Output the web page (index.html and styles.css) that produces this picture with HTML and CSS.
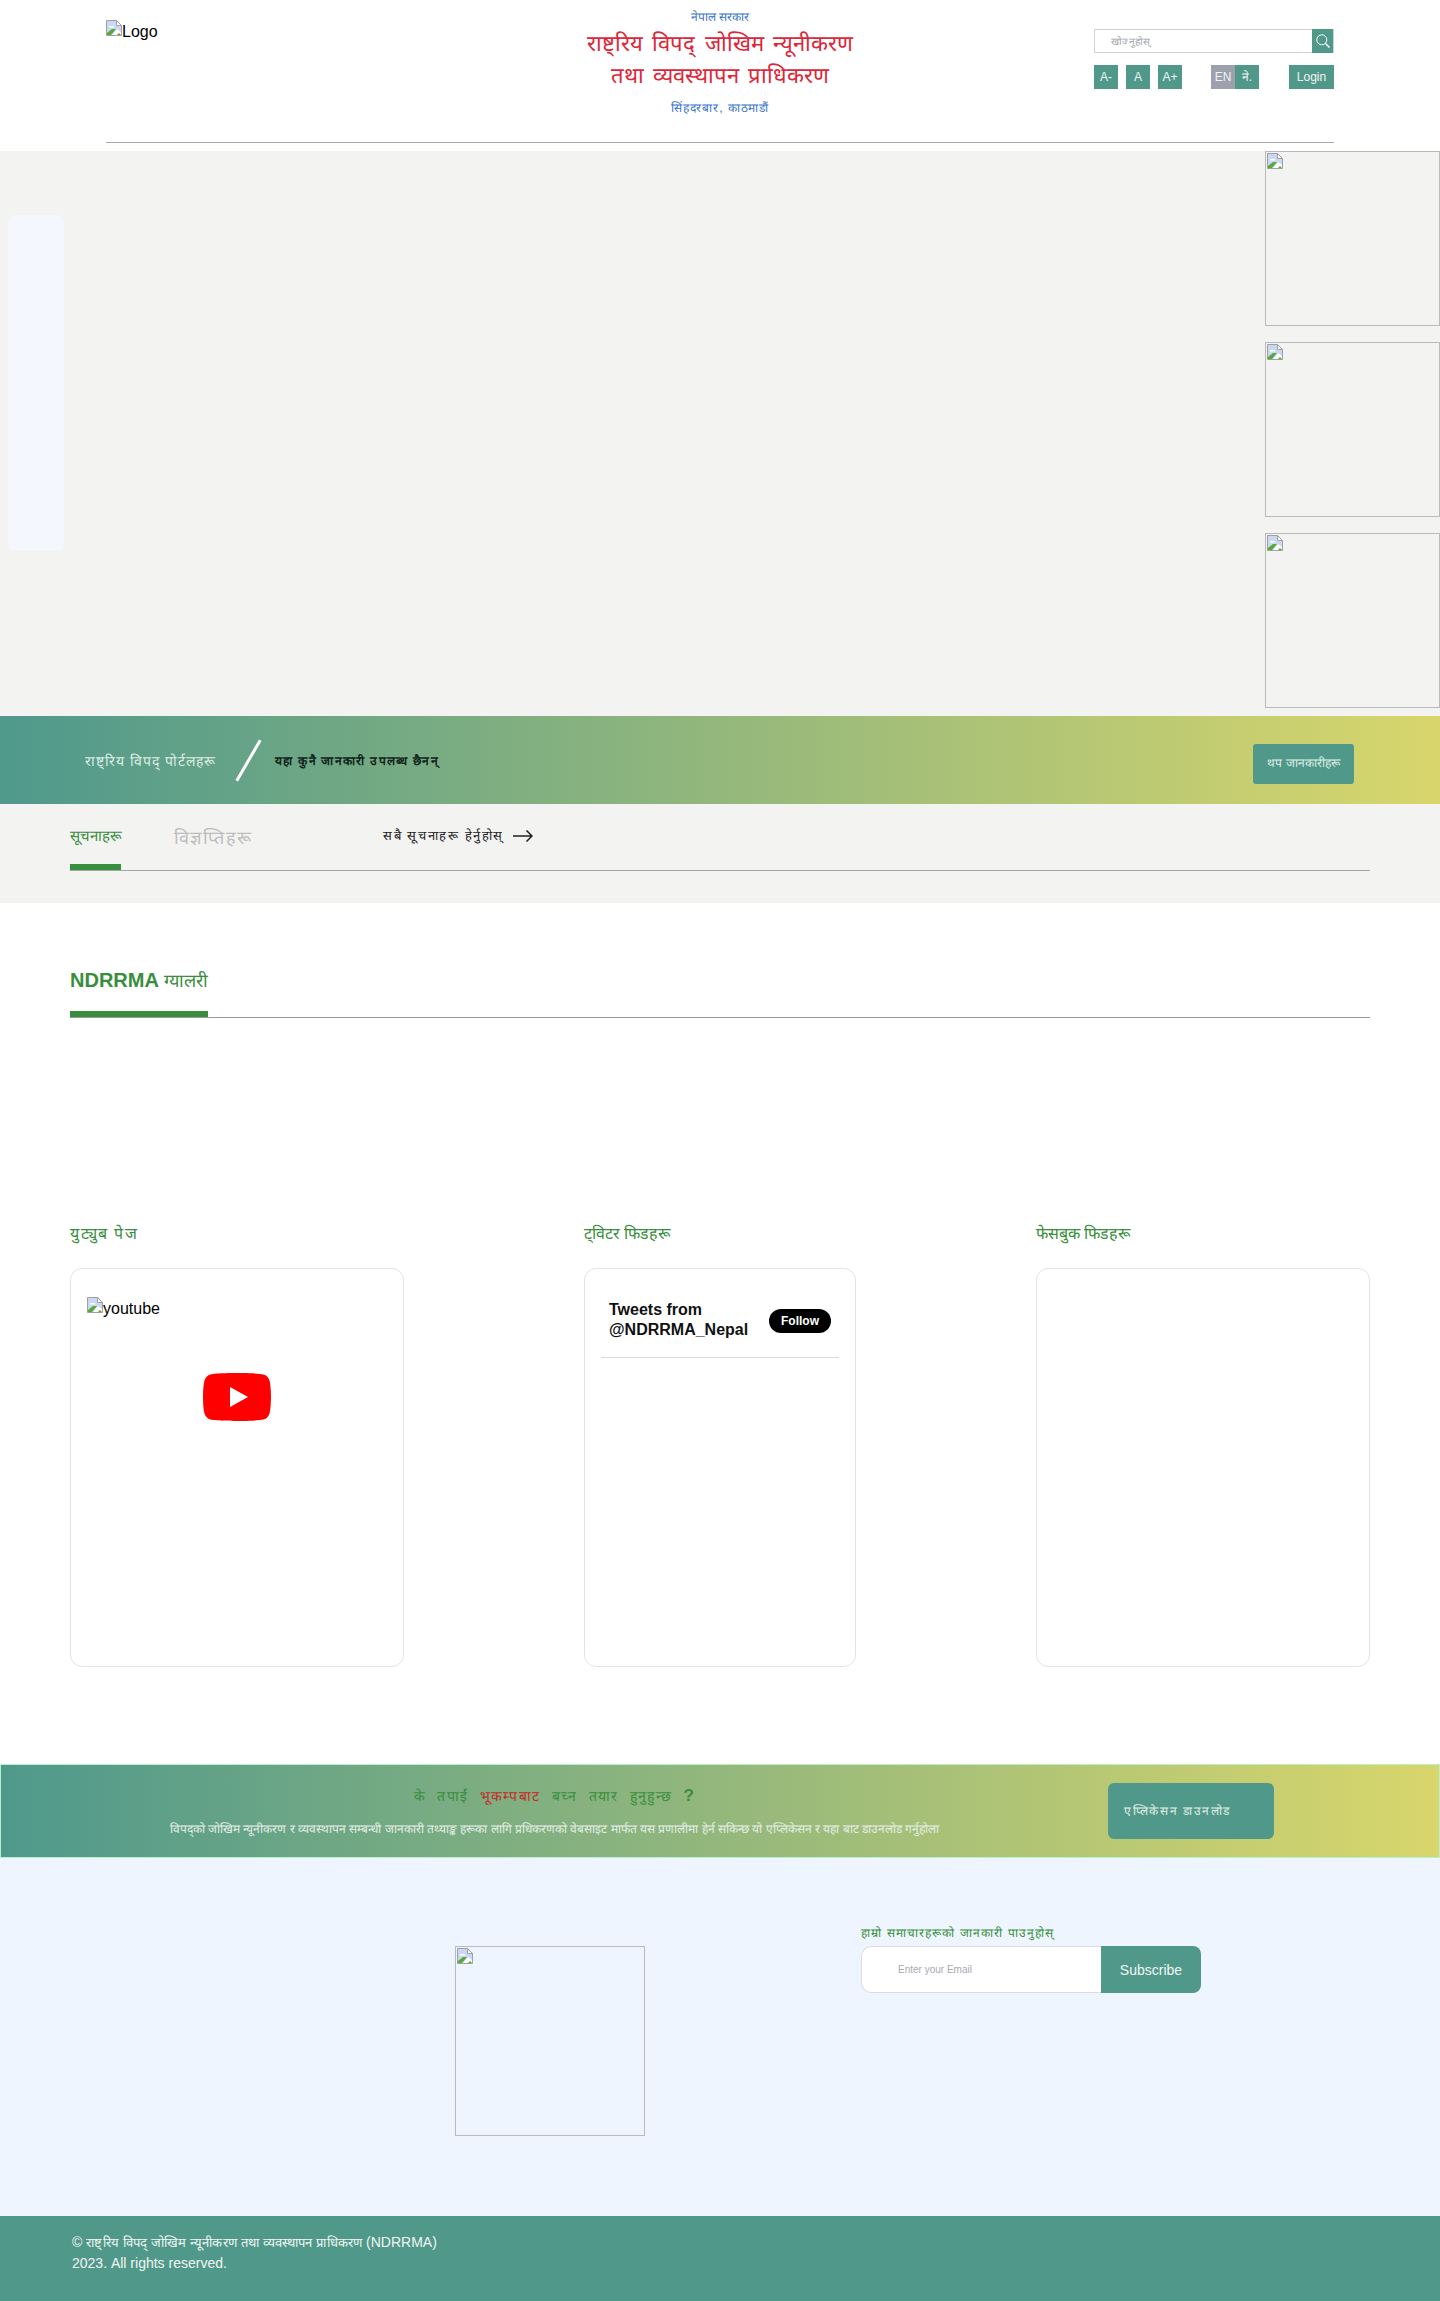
FILE: index.html
```html
<!DOCTYPE html>
<html lang="ne">
<head>
  <meta charset="UTF-8" />
  <meta name="viewport" content="width=device-width, initial-scale=1.0"/>
  <title>NDRRMA</title>
  <link rel="stylesheet" href="styles.css">
</head>
<body>

  <svg class="defs" width="0" height="0">
    <symbol id="broken" viewBox="0 0 16 16">
      <path d="M.5.5h10l5 5v10H.5z" fill="#c9d8f4" stroke="#a0a0a0"/>
      <path d="M10.5.5v5h5z" fill="#fff" stroke="#a0a0a0"/>
      <path d="M3 6h5v1.500H3z" fill="#fff"/>
      <path d="M1 15V13l5-4h4L5 15z" fill="#5aa83c"/>
      <path d="M6 15l5-6 4 3v3z" fill="#fff"/>
      <path d="M11 15l2-2 2 2z" fill="#5aa83c"/>
    </symbol>
  </svg>

  <header class="top">
    <div class="logo"><svg class="broken"><use href="#broken"/></svg>Logo</div>
    <div class="org">
      <p class="org-small">नेपाल सरकार</p>
      <h1>राष्ट्रिय विपद् जोखिम न्यूनीकरण<br>तथा व्यवस्थापन प्राधिकरण</h1>
      <p class="org-small org-addr">सिंहदरबार, काठमाडौं</p>
    </div>
    <div class="tools">
      <form class="search">
        <input type="text" placeholder="खोज्नुहोस्">
        <button type="button" aria-label="search">
          <svg width="14" height="14" viewBox="0 0 14 14" fill="none" stroke="#fff" stroke-width="1"><circle cx="5.800" cy="5.800" r="5"/><path d="M9.500 9.500l4 4" stroke-width="1.500"/></svg>
        </button>
      </form>
      <div class="tool-row">
        <div class="sizes"><a>A-</a><a>A</a><a>A+</a></div>
        <div class="langs"><a class="off">EN</a><a>ने.</a></div>
        <a class="login">Login</a>
      </div>
    </div>
  </header>

  <section class="hero">
    <div class="side-panel"></div>
    <div class="hero-imgs">
      <div class="hero-img"><svg class="broken"><use href="#broken"/></svg></div>
      <div class="hero-img"><svg class="broken"><use href="#broken"/></svg></div>
      <div class="hero-img"><svg class="broken"><use href="#broken"/></svg></div>
    </div>
  </section>

  <section class="strip">
    <span class="strip-label">राष्ट्रिय विपद् पोर्टलहरू</span>
    <span class="strip-slash"></span>
    <span class="strip-text">यहा कुनै जानकारी उपलब्ध छैनन्</span>
    <a class="strip-btn">थप जानकारीहरू</a>
  </section>

  <section class="tabs">
    <div class="tabs-row">
      <a class="tab active">सूचनाहरू</a>
      <a class="tab">विज्ञप्तिहरू</a>
      <a class="tab-link">सबै सूचनाहरू हेर्नुहोस्
        <svg width="20" height="12" viewBox="0 0 20 12" fill="none" stroke="#222" stroke-width="1.500"><path d="M0 6h19M13.500.500L19 6l-5.500 5.500"/></svg>
      </a>
    </div>
  </section>

  <section class="gallery">
    <div class="gallery-head"><h2>NDRRMA <span>ग्यालरी</span></h2></div>
  </section>

  <section class="social">
    <div class="col col-yt">
      <h3>युट्युब पेज</h3>
      <div class="card">
        <div class="yt-alt"><svg class="broken"><use href="#broken"/></svg>youtube</div>
        <svg class="yt-logo" width="68" height="48" viewBox="0 0 68 48"><path d="M66.500 7.500c-.800-3-3-5.300-6-6.100C55.200 0 34 0 34 0S12.800 0 7.500 1.400c-3 .800-5.200 3.100-6 6.100C0 12.900 0 24 0 24s0 11.100 1.500 16.500c.800 3 3 5.300 6 6.100C12.800 48 34 48 34 48s21.200 0 26.500-1.400c3-.800 5.200-3.100 6-6.100C68 35.100 68 24 68 24s0-11.100-1.500-16.500z" fill="#f00"/><path d="M27 34l18-10-18-10z" fill="#fff"/></svg>
      </div>
    </div>
    <div class="col col-tw">
      <h3>ट्विटर फिडहरू</h3>
      <div class="card">
        <div class="tw-head">
          <div class="tw-title">Tweets from @NDRRMA_Nepal</div>
          <a class="tw-follow">Follow</a>
        </div>
      </div>
    </div>
    <div class="col col-fb">
      <h3>फेसबुक फिडहरू</h3>
      <div class="card"></div>
    </div>
  </section>

  <section class="cta">
    <div class="cta-text">
      <h4>के तपाईं <em>भूकम्पबाट</em> बच्न तयार हुनुहुन्छ <b>?</b></h4>
      <p>विपद्को जोखिम न्यूनीकरण र व्यवस्थापन सम्बन्धी जानकारी तथ्याङ्क हरूका लागि प्रधिकरणको वेबसाइट मार्फत यस प्रणालीमा हेर्न सकिन्छ यो एप्लिकेसन र यहा बाट डाउनलोड गर्नुहोला</p>
    </div>
    <a class="cta-btn">एप्लिकेसन डाउनलोड</a>
  </section>

  <section class="sub">
    <div class="sub-logo"><svg class="broken"><use href="#broken"/></svg></div>
    <div class="sub-form">
      <label>हाम्रो समाचारहरूको जानकारी पाउनुहोस्</label>
      <div class="sub-row">
        <input type="text" placeholder="Enter your Email">
        <button type="button">Subscribe</button>
      </div>
    </div>
  </section>

  <footer class="foot">
    <p>© <span>राष्ट्रिय विपद् जोखिम न्यूनीकरण तथा व्यवस्थापन प्राधिकरण</span> (NDRRMA)<br>2023. All rights reserved.</p>
  </footer>

</body>
</html>
```

FILE: styles.css
```css
* {
  box-sizing: border-box;
}

body {
  margin: 0;
  background: #fff;
  color: #000;
  font-family: "Liberation Sans", Arial, sans-serif;
  font-size: 16px;
}

h1, h2, h3, h4, p {
  margin: 0;
}

.defs {
  position: absolute;
}

.broken {
  width: 16px;
  height: 16px;
  flex: none;
  display: block;
}

/* header */
.top {
  height: 151px;
  margin: 0 106px;
  position: relative;
  display: flex;
  justify-content: space-between;
}

.top::after {
  content: "";
  position: absolute;
  left: 0;
  right: 0;
  top: 142px;
  height: 1px;
  background: #a0a8ae;
}

.logo {
  width: 240px;
  padding-top: 20px;
  display: flex;
  line-height: 24px;
  font-size: 16px;
}

.org {
  text-align: center;
  padding-top: 9px;
}

.org h1 {
  font-size: 22px;
  font-weight: 400;
  line-height: 32px;
  word-spacing: 3px;
  color: #dc2639;
}

.org-small {
  font-size: 12px;
  line-height: 16px;
  color: #3a76c8;
  margin-bottom: 3px;
}

.org-addr {
  margin: 8px 0 0;
  letter-spacing: .9px;
}

.tools {
  width: 240px;
  padding-top: 29px;
}

.search {
  display: flex;
  height: 24px;
  border: 1px solid #d0d3dc;
  margin: 0;
}

.search input {
  flex: 1;
  min-width: 0;
  border: 0;
  outline: 0;
  padding: 0 0 0 16px;
  font-family: inherit;
  font-size: 10px;
  letter-spacing: .3px;
}

.search input::placeholder {
  color: #a0a4ac;
}

.search button {
  width: 21px;
  margin: -1px 0;
  padding: 0;
  border: 0;
  background: #50998a;
  display: flex;
  align-items: center;
  justify-content: center;
}

.tool-row {
  margin-top: 12px;
  display: flex;
  justify-content: space-between;
  font-size: 12px;
  line-height: 24px;
  color: #f0f5f3;
  text-align: center;
}

.sizes {
  display: flex;
  gap: 8px;
}

.sizes a, .langs a {
  width: 24px;
  background: #50998a;
}

.langs {
  display: flex;
  margin-left: 29px;
  margin-right: 30px;
}

.langs .off {
  background: #9da1ae;
}

.login {
  width: 45px;
  background: #50998a;
}

/* hero */
.hero {
  height: 565px;
  background: #f3f3f1;
  position: relative;
  display: flex;
  justify-content: flex-end;
}

.side-panel {
  position: absolute;
  left: 8px;
  top: 64px;
  width: 56px;
  height: 336px;
  background: #f4f7fd;
  border-radius: 8px;
}

.hero-imgs {
  display: flex;
  flex-direction: column;
  gap: 16px;
}

.hero-img {
  width: 175px;
  height: 175px;
  border: 1px solid #bbb;
  padding: 1px;
}

/* strip */
.strip {
  height: 88px;
  background: linear-gradient(90deg, #4f998c, #d8d66c);
  padding: 0 86px 0 85px;
  display: flex;
  align-items: center;
  font-size: 12px;
}

.strip-label {
  color: #dfeee6;
  width: 162px;
  font-size: 14px;
  letter-spacing: 1px;
}

.strip-slash {
  width: 3px;
  height: 47px;
  background: #fff;
  transform: rotate(30deg);
  margin-right: 25px;
}

.strip-text {
  color: #10241a;
  font-weight: 700;
  letter-spacing: 1.300px;
}

.strip-btn {
  margin-left: auto;
  margin-top: 8px;
  width: 101px;
  height: 40px;
  line-height: 39px;
  text-align: center;
  background: #50998a;
  border-radius: 3px;
  color: #dfeee6;
}

/* tabs */
.tabs {
  height: 99px;
  background: #f3f3f2;
  padding: 0 70px;
}

.tabs-row {
  height: 67px;
  border-bottom: 1px solid #a3a3ab;
  display: flex;
}

.tab {
  font-size: 18px;
  letter-spacing: 1.200px;
  color: #bdbdbd;
  padding-top: 24px;
  line-height: 20px;
  width: 209px;
}

.tab.active {
  font-size: 15px;
  letter-spacing: 0;
  color: #388e3c;
  width: 51px;
  margin-right: 53px;
  padding-top: 22px;
  border-bottom: 6px solid #388e3c;
  height: 66px;
  white-space: nowrap;
}

.tab-link {
  font-size: 13px;
  color: #222;
  padding-top: 24px;
  line-height: 16px;
  letter-spacing: 1.600px;
  display: flex;
  gap: 9px;
}

.tab-link svg {
  margin-top: 2px;
}

/* gallery */
.gallery {
  height: 305px;
  padding: 0 70px;
}

.gallery-head {
  height: 115px;
  border-bottom: 1px solid #999;
  display: flex;
  align-items: flex-end;
}

.gallery-head h2 {
  width: 138px;
  font-size: 20px;
  line-height: 24px;
  font-weight: 700;
  color: #388e3c;
  padding-bottom: 18px;
  border-bottom: 6px solid #388e3c;
  white-space: nowrap;
}

.gallery-head h2 span {
  font-size: 18px;
  font-weight: 400;
}

/* social */
.social {
  padding: 0 70px;
  display: flex;
  justify-content: space-between;
}

.col h3 {
  font-size: 16px;
  font-weight: 400;
  line-height: 20px;
  color: #388e3c;
  margin: 16px 0 24px;
}

.col-yt { width: 334px; }
.col-tw { width: 272px; }
.col-fb { width: 334px; }

.col-yt h3 {
  letter-spacing: 1.500px;
}

.card {
  height: 399px;
  border: 1px solid #e4e4e4;
  border-radius: 12px;
  padding: 28px 16px;
}

.yt-alt {
  display: flex;
  align-items: flex-start;
  line-height: 24px;
}

.yt-logo {
  display: block;
  margin: 52px auto 0;
}

.col-tw .card {
  padding: 0 16px;
}

.tw-head {
  height: 89px;
  padding: 31px 8px 0;
  border-bottom: 1px solid #d8d8d8;
  display: flex;
  justify-content: space-between;
}

.tw-title {
  width: 150px;
  font-size: 16px;
  font-weight: 700;
  line-height: 20px;
  color: #111;
}

.tw-follow {
  width: 62px;
  height: 24px;
  margin-top: 9px;
  background: #000;
  border-radius: 12px;
  color: #fff;
  font-size: 12px;
  font-weight: 700;
  line-height: 24px;
  text-align: center;
}

/* call to action */
.cta {
  height: 94px;
  margin-top: 97px;
  border: 1px solid #b8f0cc;
  background: linear-gradient(90deg, #4f998c, #d8d66c);
  padding-right: 165px;
  display: flex;
  align-items: center;
  justify-content: space-between;
}

.cta-text {
  width: 1108px;
  text-align: center;
}

.cta h4 {
  font-size: 14px;
  font-weight: 400;
  line-height: 20px;
  color: #388e3c;
  letter-spacing: 1.300px;
  word-spacing: 6px;
}

.cta h4 em {
  font-style: normal;
  color: #c62828;
}

.cta h4 b {
  font-size: 17px;
}

.cta p {
  margin-top: 15px;
  font-size: 12px;
  line-height: 16px;
  color: #e4efe6;
}

.cta-btn {
  width: 166px;
  height: 56px;
  line-height: 56px;
  padding-left: 16px;
  background: #50998a;
  border-radius: 6px;
  font-size: 12px;
  letter-spacing: 1.600px;
  color: #e4efe6;
}

/* subscribe */
.sub {
  height: 358px;
  background: #eef5fe;
  padding: 88px 239px 0 455px;
  display: flex;
  justify-content: space-between;
}

.sub-logo {
  width: 190px;
  height: 190px;
  border: 1px solid #bbb;
  padding: 1px;
}

.sub-form {
  width: 340px;
  margin-top: -23px;
}

.sub-form label {
  display: block;
  font-size: 12px;
  line-height: 20px;
  letter-spacing: 1.100px;
  margin-bottom: 3px;
  color: #388e3c;
}

.sub-row {
  display: flex;
  height: 47px;
}

.sub-row input {
  width: 240px;
  border: 1px solid #dcdce0;
  border-right: 0;
  border-radius: 10px 0 0 10px;
  padding: 0 0 0 36px;
  outline: 0;
  font-family: inherit;
  font-size: 10px;
}

.sub-row input::placeholder {
  color: #a8a8b0;
}

.sub-row button {
  width: 100px;
  border: 0;
  border-radius: 0 8px 8px 0;
  background: #50998a;
  color: #f0f5f3;
  font-family: inherit;
  font-size: 14px;
}

/* footer */
.foot {
  height: 85px;
  background: #50998a;
  padding: 16px 72px 0;
  color: #f0f5f3;
  font-size: 14px;
  line-height: 21px;
}

.foot span {
  font-size: 13px;
  letter-spacing: .15px;
}
```
